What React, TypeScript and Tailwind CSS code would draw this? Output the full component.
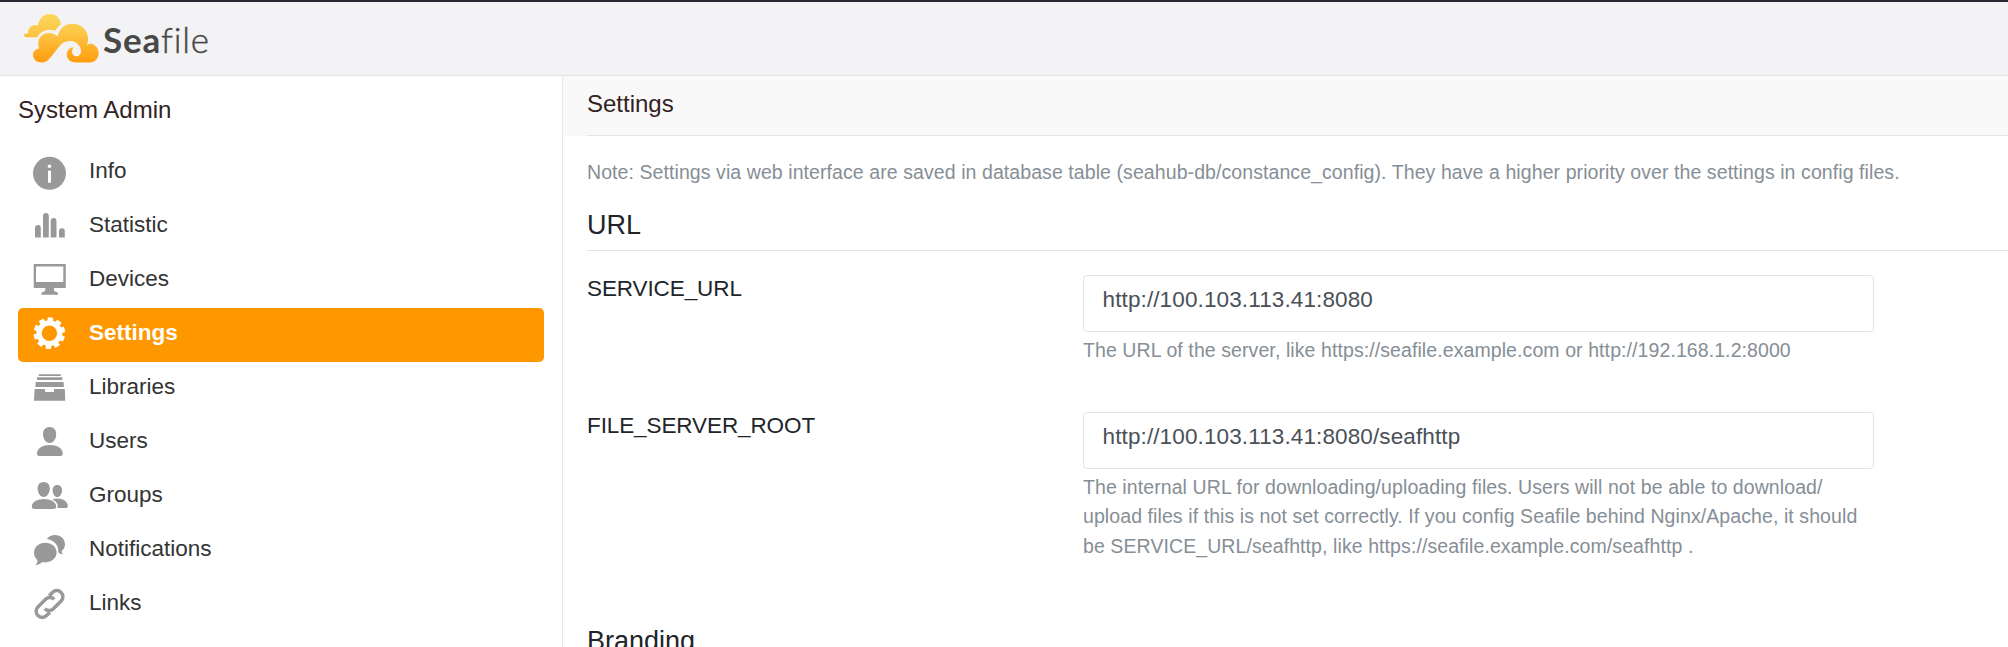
import React from "react";

type IconName = "info" | "statistic" | "devices" | "settings" | "libraries" | "users" | "groups" | "notifications" | "links";

const gearTeeth = Array.from({ length: 10 }, (_, i) => i * 36 + 4);

const shapes: Record<IconName, React.ReactNode> = {
  info: (
    <>
      <circle cx="21.5" cy="27.3" r="16.5" />
      <circle cx="21.5" cy="20.2" r="1.8" fill="#fff" />
      <rect x="20" y="24.7" width="3" height="12" fill="#fff" />
    </>
  ),
  statistic: (
    <path d="M7 37.5V28a2.9 2.9 0 0 1 5.8 0V37.5ZM15 37.5V16a2.9 2.9 0 0 1 5.8 0V37.5ZM22.7 37.5V21a2.9 2.9 0 0 1 5.8 0V37.5ZM31 37.5V31.2a2.9 2.9 0 0 1 5.8 0V37.5Z" />
  ),
  devices: (
    <path fillRule="evenodd" d="M6.2 10H37.2Q37.8 10 37.8 10.6V33.3Q37.8 34 37 34H26V36.4Q26.5 37.6 29 38Q30 38.3 30 40.7H13.3Q13.3 38.3 14.5 38Q16.8 37.6 17.3 36.4V34H6.4Q5.7 34 5.7 33.3V10.6Q5.7 10 6.2 10ZM8 12.6V28H35.3V12.6Z" />
  ),
  settings: (
    <>
      <circle cx="21.4" cy="25.2" r="10.3" fill="none" stroke="currentColor" strokeWidth="5.2" />
      {gearTeeth.map((a) => (
        <path key={a} transform={`rotate(${a} 21.4 25.2)`} d="M18.6 14 18.7 9.5H24.1L24.2 14Z" />
      ))}
    </>
  ),
  libraries: (
    <path d="M10.7 12.3H32.7V14H10.7ZM9 15.3H34.3V18H9ZM7.8 20H35.5L36 25H7.3ZM6.6 27H17V29.2Q17 30 18 30H25Q26 30 26 29.2V27H36.8L37.3 38.7H6Z" />
  ),
  users: (
    <path d="M21.6 11C25.8 11 28.2 14 28.2 18.2C28.2 22.5 25.5 27 21.6 27C17.8 27 15 22.5 15 18.2C15 14 17.4 11 21.6 11ZM21.8 29C29 29 34.8 32.4 34.8 37.5C34.8 39.6 33.5 40 31 40H12.6C10 40 9 39.6 9 37.5C9 32.4 14.8 29 21.8 29Z" />
  ),
  groups: (
    <path d="M15.7 12C19.6 12 21.8 14.8 21.8 18.5C21.8 22.6 19.3 27 15.7 27C12.1 27 9.6 22.6 9.6 18.5C9.6 14.8 11.8 12 15.7 12ZM16 29C22.6 29 28.2 32 28.2 36.8C28.2 38.6 27 39 24.8 39H7.2C4.8 39 3.8 38.6 3.8 36.8C3.8 32 9.4 29 16 29ZM29.3 15C32.3 15 34 17.2 34 20.2C34 23.5 32.1 27 29.3 27C26.5 27 24.6 23.5 24.6 20.2C24.6 17.2 26.3 15 29.3 15ZM24.3 29.4C32 26.8 39.8 30.3 39.8 35.9C39.8 37.6 38.8 38 37.2 38H29.5C30.2 34 28.4 31.2 24.3 29.4Z" />
  ),
  notifications: (
    <path d="M17.3 18.8C23.8 18.8 28.6 23 28.6 28.6C28.6 34.2 23.6 38.4 17.3 38.4C16 38.4 15 38.3 14 38C12.7 39.8 10.5 41 7.8 40.9C9 39.6 9.5 37.8 9.3 36C7.2 34.2 6 31.6 6 28.6C6 23 10.8 18.8 17.3 18.8ZM18.8 15C20.8 12.2 23.8 10.9 27 10.9C32.8 10.9 37 15 37 20.3C37 23 35.7 25.5 33.7 27C33.6 28.3 34.2 29.3 35.3 30.2C32.8 30.2 30.9 29.4 30.3 28.2C31 21.3 26 16 18.8 15Z" />
  ),
  links: (
    <g transform="translate(21.5 26) rotate(-45)" fill="none" stroke="currentColor" strokeWidth="3.5">
      <path d="M5.6 -6.1H10.3A6.1 6.1 0 0 1 10.3 6.1H-0.6A6.1 6.1 0 0 1 -6.6 0" />
      <path d="M-5.6 6.1H-10.3A6.1 6.1 0 0 1 -10.3 -6.1H0.6A6.1 6.1 0 0 1 6.6 0" />
    </g>
  ),
};

const items: { icon: IconName; label: string }[] = [
  { icon: "info", label: "Info" },
  { icon: "statistic", label: "Statistic" },
  { icon: "devices", label: "Devices" },
  { icon: "settings", label: "Settings" },
  { icon: "libraries", label: "Libraries" },
  { icon: "users", label: "Users" },
  { icon: "groups", label: "Groups" },
  { icon: "notifications", label: "Notifications" },
  { icon: "links", label: "Links" },
];

function Logo() {
  return (
    <div className="flex items-start pl-6">
      <svg className="mt-3 h-[50px] w-[76px] shrink-0" viewBox="24 14 76 50">
        <defs>
          <linearGradient id="cloud" gradientUnits="userSpaceOnUse" x1="0" y1="14" x2="0" y2="63">
            <stop offset="0" stopColor="#fbd85c" />
            <stop offset="0.4" stopColor="#fcc544" />
            <stop offset="1" stopColor="#ff9b0c" />
          </linearGradient>
        </defs>
        <path fill="url(#cloud)" d="M26 37.3C23.4 37.2 23.4 33.3 26.2 33.4C27.3 33.5 27.8 34 28.3 33C27.6 28 32.5 23.8 38 25.4C39 18.5 44 14 50 14C56 14 60.2 18 61 24.6C58.6 26 56.8 27.8 55.6 30.6C48 28.2 41 30.5 37.2 37.3Z" />
        <path fill="url(#cloud)" d="M42 62.5C36.3 62.5 33 59 33 55C33 51.3 35.6 48.8 39.3 48.4C36 40 41 33 49 33C52.5 33 55.5 34.3 57.5 36.6C59.3 28.5 65 23.8 72.5 23.8C81.5 23.8 88 30.5 88 39C88 41.3 87.5 43.3 86.8 45.2C88.4 43.8 90 43.4 91.6 43.8C96 45 98.6 49 98.6 53C98.6 58.5 94.6 62.5 89.5 62.5H76.5C70.5 62.5 66.8 59 66.8 54.5C66.8 50.3 70 47.3 73.8 47.3C70.8 50.3 71.6 56.3 76.4 56.3C79.3 56.3 81 54 81 51.2C81 45.5 76 41 70.5 41C61.5 41 59.5 46.5 54.5 52.5C49.5 58.5 47.3 62.5 42 62.5Z" />
      </svg>
      <div className="mt-4 ml-[3px] font-['Lato'] text-[35px] leading-[42px] tracking-[0.8px] whitespace-nowrap text-[#484848]">
        <span className="font-bold">Sea</span>
        <span className="font-light [-webkit-text-stroke:0.4px_#484848]">file</span>
      </div>
    </div>
  );
}

function Field({ label, value, help }: { label: string; value: string; help: string }) {
  return (
    <div className="flex">
      <div className="w-[496px] shrink-0 text-[22.5px] leading-7 tracking-[-0.1px] text-[#212529]">{label}</div>
      <div className="w-[791px] shrink-0">
        <div className="flex h-[57px] items-start rounded-[4px] border-[1.5px] border-[#e0e5ec] bg-white pt-[9px] pl-[18.5px] text-[22.5px] leading-[30px] tracking-[0.12px] text-[#495057]">
          {value}
        </div>
        <p className="pt-1 text-[19.5px] leading-[29.6px] tracking-[0.088px] whitespace-pre-line text-[#868e96]">{help}</p>
      </div>
    </div>
  );
}

export default function App() {
  return (
    <div className="flex h-[647px] w-[2008px] flex-col overflow-hidden bg-white font-['Liberation_Sans',sans-serif]">
      <header className="h-[76px] shrink-0 border-t-2 border-b border-t-[#2a2530] border-b-[#e5e5e6] bg-[#f3f3f5]">
        <Logo />
      </header>
      <div className="flex min-h-0 flex-1">
        <aside className="w-[563px] shrink-0 border-r border-[#e9e9e9] pr-[18px] pl-[18px]">
          <h3 className="h-[70px] pt-5 text-[24px] leading-7 text-[#322]">System Admin</h3>
          <nav>
            {items.map(({ icon, label }) => {
              const active = icon === "settings";
              return (
                <a
                  key={icon}
                  className={
                    active
                      ? "flex h-[54px] rounded-[5px] bg-[#ff9800] pl-[10px] font-bold text-white"
                      : "flex h-[54px] pl-[10px] text-[#333]"
                  }
                >
                  <svg viewBox="0 0 44 54" className={active ? "h-[54px] w-11 text-white" : "h-[54px] w-11 text-[#999]"} fill="currentColor">
                    {shapes[icon]}
                  </svg>
                  <span className="pt-[10px] pl-[17px] text-[22.5px] leading-[30px]">{label}</span>
                </a>
              );
            })}
          </nav>
        </aside>
        <main className="flex min-w-0 flex-1 flex-col">
          <div className="h-[60px] shrink-0 bg-[#f9f9f9] pl-6">
            <h3 className="h-[60px] border-b border-[#e4e4e4] pt-[14px] text-[24px] leading-7 text-[#322]">Settings</h3>
          </div>
          <div className="pl-6">
            <p className="pt-[21px] text-[19.5px] leading-[30px] tracking-[0.08px] text-[#868e96]">
              Note: Settings via web interface are saved in database table (seahub-db/constance_config). They have a higher priority over the settings in config files.
            </p>
            <h4 className="mt-[22px] h-[42px] border-b border-[#dee2e6] text-[27px] leading-8 text-[#212529]">URL</h4>
            <div className="pt-6">
              <Field
                label="SERVICE_URL"
                value="http://100.103.113.41:8080"
                help="The URL of the server, like https://seafile.example.com or http://192.168.1.2:8000"
              />
            </div>
            <div className="pt-[46px]">
              <Field
                label="FILE_SERVER_ROOT"
                value="http://100.103.113.41:8080/seafhttp"
                help={
                  "The internal URL for downloading/uploading files. Users will not be able to download/\nupload files if this is not set correctly. If you config Seafile behind Nginx/Apache, it should\nbe SERVICE_URL/seafhttp, like https://seafile.example.com/seafhttp ."
                }
              />
            </div>
            <h4 className="pt-16 text-[27px] leading-8 text-[#212529]">Branding</h4>
          </div>
        </main>
      </div>
    </div>
  );
}
